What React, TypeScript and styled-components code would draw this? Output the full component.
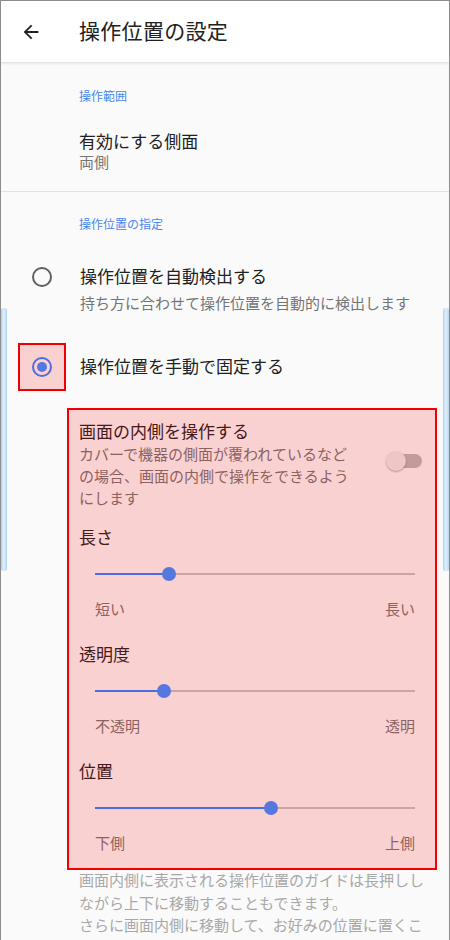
import styled, { createGlobalStyle } from 'styled-components';

const GlobalStyle = createGlobalStyle`
    * { box-sizing: border-box; }
    html, body { margin: 0; padding: 0; background: #ffffff; }
    body {
        font-family: Roboto, 'Noto Sans CJK JP', sans-serif;
        -webkit-font-smoothing: antialiased;
    }
`;

const COLORS = {
    text: '#212121',
    sub: '#757575',
    hint: '#a8a8a8',
    accent: '#4a86f0',
    active: '#4a6ee0',
    thumb: '#5677e0',
    track: '#c4c4c4',
    divider: '#e2e2e2',
    bg: '#fafafa',
};

const Screen = styled.div`
    position: relative;
    width: 450px;
    height: 940px;
    overflow: hidden;
    background: ${COLORS.bg};
    border: 1px solid #8c8c8c;
    border-bottom: none;
`;

const AppBar = styled.header`
    height: 61px;
    display: flex;
    align-items: center;
    background: #ffffff;
    box-shadow: 0 1px 3px rgba(0, 0, 0, 0.14);
    position: relative;
    z-index: 1;
`;

const BackButton = styled.div`
    width: 78px;
    height: 61px;
    display: flex;
    align-items: center;
    padding-left: 19px;
    color: ${COLORS.text};
`;

const Title = styled.h1`
    margin: 0;
    font-size: 21px;
    font-weight: 400;
    color: ${COLORS.text};
    line-height: 28px;
    letter-spacing: 0.3px;
`;

const Section = styled.section<{ $top: number; $bottom: number; $divider?: boolean }>`
    padding: ${(p) => p.$top}px 0 ${(p) => p.$bottom}px;
    border-bottom: ${(p) => (p.$divider ? `1px solid ${COLORS.divider}` : 'none')};
`;

const Category = styled.div`
    padding-left: 78px;
    font-size: 12px;
    line-height: 16px;
    color: ${COLORS.accent};
`;

const Item = styled.div<{ $top: number }>`
    padding: ${(p) => p.$top}px 0 0 78px;
`;

const ItemTitle = styled.div`
    font-size: 17px;
    line-height: 22px;
    color: ${COLORS.text};
`;

const ItemSummary = styled.div<{ $gap?: number }>`
    font-size: 15px;
    line-height: 20px;
    color: ${COLORS.sub};
    margin-top: ${(p) => p.$gap ?? 0}px;
`;

const RadioRow = styled.div<{ $top: number }>`
    display: flex;
    align-items: flex-start;
    padding: 0 0 0 17px;
    margin-top: ${(p) => p.$top}px;
`;

const RadioCell = styled.div`
    position: relative;
    width: 48px;
    height: 48px;
    flex: none;
    display: flex;
    align-items: center;
    justify-content: center;
    margin-right: 14px;
`;

const RadioCircle = styled.span<{ $on?: boolean }>`
    position: relative;
    z-index: 1;
    width: 20px;
    height: 20px;
    border-radius: 50%;
    border: 2px solid ${(p) => (p.$on ? COLORS.active : '#5f5f5f')};
    display: flex;
    align-items: center;
    justify-content: center;
    &::after {
        content: '';
        width: 10px;
        height: 10px;
        border-radius: 50%;
        background: ${COLORS.thumb};
        display: ${(p) => (p.$on ? 'block' : 'none')};
    }
`;

const RadioText = styled.div<{ $top: number }>`
    padding-top: ${(p) => p.$top}px;
`;

/* annotation highlight drawn over the content */
const Highlight = styled.div`
    position: relative;
    &::after {
        content: '';
        position: absolute;
        inset: 0;
        background: rgba(255, 0, 0, 0.16);
        border: 2px solid #f00000;
        pointer-events: none;
    }
`;

const Panel = styled(Highlight)`
    margin: 17px 0 0 66px;
    width: 370px;
    padding: 13px 5px 15px 12px;
`;

const SwitchRow = styled.div`
    display: flex;
    align-items: flex-start;
    justify-content: space-between;
`;

const SwitchText = styled.div`
    width: 280px;
`;

const Desc = styled.div`
    font-size: 15px;
    line-height: 22px;
    color: ${COLORS.sub};
    margin-top: 1px;
`;

const Switch = styled.div`
    position: relative;
    width: 36px;
    height: 20px;
    margin: 30px 10px 0 0;
    &::before {
        content: '';
        position: absolute;
        left: 6px;
        right: 0;
        top: 3px;
        height: 14px;
        border-radius: 7px;
        background: #b9b9b9;
    }
    &::after {
        content: '';
        position: absolute;
        left: 0;
        top: 0;
        width: 20px;
        height: 20px;
        border-radius: 50%;
        background: #ececec;
        box-shadow: 0 1px 2px rgba(0, 0, 0, 0.3);
    }
`;

const SliderBlock = styled.div<{ $top: number }>`
    margin-top: ${(p) => p.$top}px;
`;

const SliderTrack = styled.div`
    position: relative;
    height: 50px;
    margin-left: 16px;
    width: 320px;
    display: flex;
    align-items: center;
`;

const TrackLine = styled.div`
    width: 100%;
    height: 2px;
    background: ${COLORS.track};
    position: relative;
`;

const TrackFill = styled.div`
    position: absolute;
    z-index: 1;
    left: 0;
    top: 0;
    height: 2px;
    background: ${COLORS.active};
`;

const Thumb = styled.div`
    position: absolute;
    z-index: 1;
    top: 50%;
    width: 14px;
    height: 14px;
    margin: -7px 0 0 -7px;
    border-radius: 50%;
    background: ${COLORS.thumb};
`;

const SliderLabels = styled.div`
    display: flex;
    justify-content: space-between;
    margin-left: 16px;
    width: 320px;
    font-size: 15px;
    line-height: 22px;
    color: ${COLORS.sub};
`;

const Footnote = styled.div`
    padding: 0 12px 0 78px;
    font-size: 15px;
    line-height: 22.5px;
    color: ${COLORS.hint};
`;

const EdgeGuide = styled.div<{ $side: 'left' | 'right' }>`
    position: absolute;
    top: 307px;
    ${(p) => p.$side}: 0;
    width: 6px;
    height: 263px;
    border-radius: 2px;
    background: linear-gradient(90deg, #a9cdf0, #dff0fb 50%, #a9cdf0);
    opacity: 0.9;
`;

function Slider({ title, value, min, max, top }: { title: string; value: number; min: string; max: string; top: number }) {
    return (
        <SliderBlock $top={top}>
            <ItemTitle>{title}</ItemTitle>
            <SliderTrack>
                <TrackLine>
                    <TrackFill style={{ width: `${value * 100}%` }} />
                </TrackLine>
                <Thumb style={{ left: `${value * 100}%` }} />
            </SliderTrack>
            <SliderLabels>
                <span>{min}</span>
                <span>{max}</span>
            </SliderLabels>
        </SliderBlock>
    );
}

export default function App() {
    return (
        <>
            <GlobalStyle />
            <Screen>
                <AppBar>
                    <BackButton>
                        <svg width="22" height="22" viewBox="0 0 24 24" aria-hidden="true">
                            <path d="M20 11H7.83l5.59-5.59L12 4l-8 8 8 8 1.41-1.41L7.83 13H20v-2z" fill="currentColor" />
                        </svg>
                    </BackButton>
                    <Title>操作位置の設定</Title>
                </AppBar>

                <Section $top={27} $bottom={18} $divider>
                    <Category>操作範囲</Category>
                    <Item $top={26}>
                        <ItemTitle>有効にする側面</ItemTitle>
                        <ItemSummary>両側</ItemSummary>
                    </Item>
                </Section>

                <Section $top={25} $bottom={0}>
                    <Category>操作位置の指定</Category>
                    <RadioRow $top={20}>
                        <RadioCell>
                            <RadioCircle />
                        </RadioCell>
                        <RadioText $top={13}>
                            <ItemTitle>操作位置を自動検出する</ItemTitle>
                            <ItemSummary $gap={6}>持ち方に合わせて操作位置を自動的に検出します</ItemSummary>
                        </RadioText>
                    </RadioRow>
                    <RadioRow $top={29}>
                        <Highlight as={RadioCell}>
                            <RadioCircle $on />
                        </Highlight>
                        <RadioText $top={13}>
                            <ItemTitle>操作位置を手動で固定する</ItemTitle>
                        </RadioText>
                    </RadioRow>

                    <Panel>
                        <SwitchRow>
                            <SwitchText>
                                <ItemTitle>画面の内側を操作する</ItemTitle>
                                <Desc>カバーで機器の側面が覆われているなどの場合、画面の内側で操作をできるようにします</Desc>
                            </SwitchText>
                            <Switch />
                        </SwitchRow>
                        <Slider top={17} title="長さ" value={0.23} min="短い" max="長い" />
                        <Slider top={23} title="透明度" value={0.215} min="不透明" max="透明" />
                        <Slider top={23} title="位置" value={0.55} min="下側" max="上側" />
                    </Panel>

                    <Footnote>
                        画面内側に表示される操作位置のガイドは長押ししながら上下に移動することもできます。
                        <br />
                        さらに画面内側に移動して、お好みの位置に置くこともできます。
                    </Footnote>
                </Section>

                <EdgeGuide $side="left" />
                <EdgeGuide $side="right" />
            </Screen>
        </>
    );
}
